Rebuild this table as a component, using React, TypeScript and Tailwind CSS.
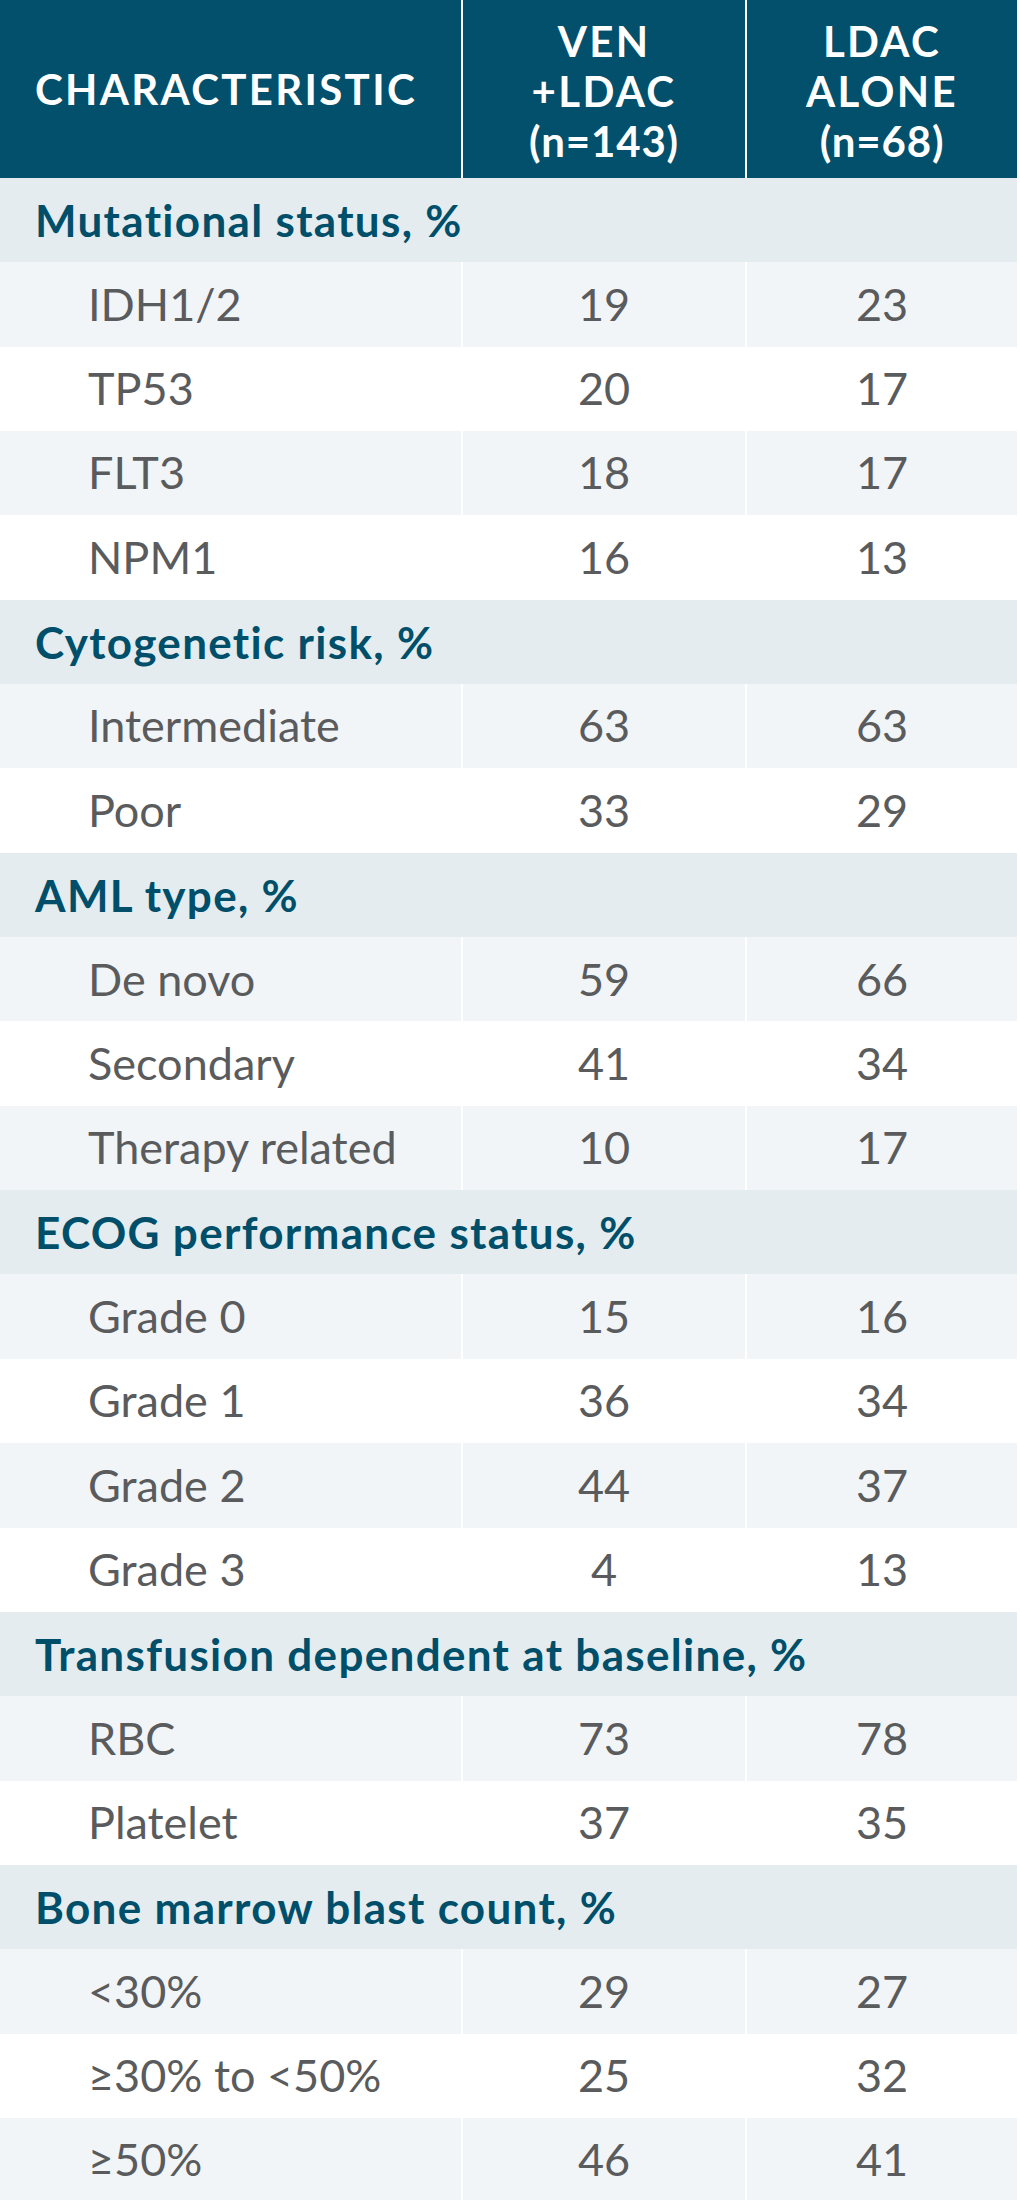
type Row = { label: string; a: string; b: string }
type Section = { title: string; rows: Row[] }

const sections: Section[] = [
  {
    title: "Mutational status, %",
    rows: [
      { label: "IDH1/2", a: "19", b: "23" },
      { label: "TP53", a: "20", b: "17" },
      { label: "FLT3", a: "18", b: "17" },
      { label: "NPM1", a: "16", b: "13" },
    ],
  },
  {
    title: "Cytogenetic risk, %",
    rows: [
      { label: "Intermediate", a: "63", b: "63" },
      { label: "Poor", a: "33", b: "29" },
    ],
  },
  {
    title: "AML type, %",
    rows: [
      { label: "De novo", a: "59", b: "66" },
      { label: "Secondary", a: "41", b: "34" },
      { label: "Therapy related", a: "10", b: "17" },
    ],
  },
  {
    title: "ECOG performance status, %",
    rows: [
      { label: "Grade 0", a: "15", b: "16" },
      { label: "Grade 1", a: "36", b: "34" },
      { label: "Grade 2", a: "44", b: "37" },
      { label: "Grade 3", a: "4", b: "13" },
    ],
  },
  {
    title: "Transfusion dependent at baseline, %",
    rows: [
      { label: "RBC", a: "73", b: "78" },
      { label: "Platelet", a: "37", b: "35" },
    ],
  },
  {
    title: "Bone marrow blast count, %",
    rows: [
      { label: "<30%", a: "29", b: "27" },
      { label: "≥30% to <50%", a: "25", b: "32" },
      { label: "≥50%", a: "46", b: "41" },
    ],
  },
]

const font = "font-['Lato','Open_Sans',sans-serif]"

const DataRow = ({ row, shaded }: { row: Row; shaded: boolean }) => {
  const bg = shaded ? "bg-[#f1f5f8]" : "bg-white"
  const cell = `${bg} flex h-[84.35px] items-center`
  return (
    <div className="grid grid-cols-[461px_282px_270px] gap-x-[2px] text-[45px] text-[#5a5b5d]">
      <div className={`${cell} pl-[88px]`}>{row.label}</div>
      <div className={`${cell} justify-center`}>{row.a}</div>
      <div className={`${cell} justify-center`}>{row.b}</div>
    </div>
  )
}

const App = () => {
  return (
    <div className={`${font} w-[1020px] bg-white`}>
      <div className="w-[1017px]">
        <div className="grid h-[178px] grid-cols-[461px_282px_270px] gap-x-[2px] bg-white text-[42px] font-bold leading-[50px] tracking-[0.055em] text-white">
          <div className="flex items-center bg-[#02506b] pl-[35px]">CHARACTERISTIC</div>
          <div className="flex flex-col items-center justify-center bg-[#02506b] pt-[4px] text-center">
            <span>VEN</span>
            <span>+LDAC</span>
            <span className="tracking-[0.02em]">(n=143)</span>
          </div>
          <div className="flex flex-col items-center justify-center bg-[#02506b] pt-[4px] text-center">
            <span>LDAC</span>
            <span>ALONE</span>
            <span className="tracking-[0.02em]">(n=68)</span>
          </div>
        </div>

        {sections.map((section) => (
          <div key={section.title}>
            <div className="flex h-[84.35px] items-center bg-[#e4ecef] pl-[35px] text-[44px] font-bold tracking-[0.03em] text-[#004f6a]">
              {section.title}
            </div>
            {section.rows.map((row, i) => (
              <DataRow key={row.label} row={row} shaded={i % 2 === 0} />
            ))}
          </div>
        ))}
      </div>
    </div>
  )
}

export default App
